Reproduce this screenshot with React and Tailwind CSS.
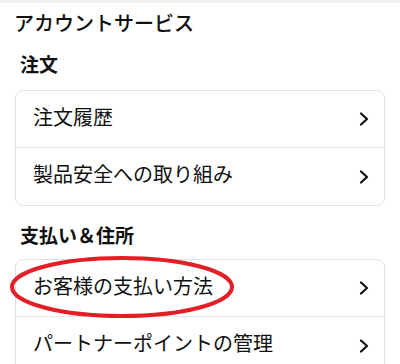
import React from 'react'

const FONT = { fontFamily: '"Noto Sans CJK JP", "Noto Sans", sans-serif' }

function Chevron(){
  return (
    <svg width="10" height="14" viewBox="0 0 10 14" className="shrink-0">
      <path d="M2 1.5 L8 7 L2 12.5" fill="none" stroke="#111" strokeWidth="2.2" strokeLinecap="round" strokeLinejoin="round" />
    </svg>
  )
}

function Card({ items }){
  return (
    <div className="mx-[15px] border border-[#e2e2e2] rounded-lg divide-y divide-[#e6e6e6] bg-white">
      {items.map(t => (
        <div key={t} className="h-[57px] flex items-center justify-between pl-[17px] pr-[15px]">
          <span className="text-[20px] text-[#111] leading-none mb-[5px]">{t}</span>
          <Chevron />
        </div>
      ))}
    </div>
  )
}

export default function App(){
  return (
    <div className="relative w-[400px] h-[364px] bg-white overflow-hidden" style={FONT}>
      <div className="h-[3px] bg-[#f0f0f0]" />
      <div className="h-[40px] flex items-center pl-[14px] text-[20px] font-medium text-[#111]">アカウントサービス</div>

      <div className="h-[47px] pb-[4px] flex items-center px-[20px] text-[19px] font-bold text-[#111]">注文</div>
      <Card items={['注文履歴', '製品安全への取り組み']} />

      <div className="h-[53px] pt-[6px] flex items-center px-[20px] text-[19px] font-bold text-[#111]">支払い＆住所</div>
      <Card items={['お客様の支払い方法', 'パートナーポイントの管理']} />

      {/* red hand-drawn circle */}
      <svg className="absolute left-[8px] top-[254px]" width="228" height="66" viewBox="0 0 228 66">
        <ellipse cx="114" cy="33" rx="110" ry="29" fill="none" stroke="#e41e26" strokeWidth="4" />
      </svg>
    </div>
  )
}
